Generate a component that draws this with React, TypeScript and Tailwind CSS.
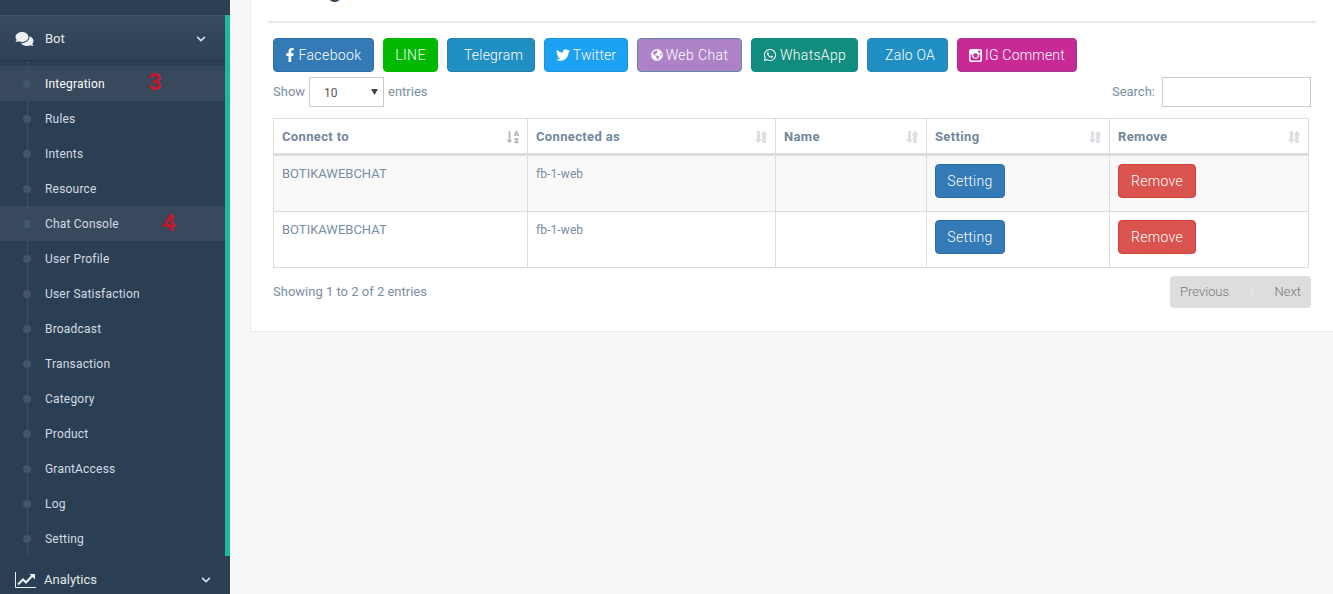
import React from "react";
import { FaComments, FaChevronDown, FaFacebookF, FaTwitter, FaGlobeAmericas, FaWhatsapp, FaSortAlphaDown } from "react-icons/fa";

const menu = ["Integration", "Rules", "Intents", "Resource", "Chat Console", "User Profile", "User Satisfaction", "Broadcast", "Transaction", "Category", "Product", "GrantAccess", "Log", "Setting"];

function SortIcon() {
  return (
    <svg width="14" height="14" viewBox="0 0 14 14" className="fill-[#dcdfe3]">
      <path d="M3 1h3v8h2.2L4.5 13.5 0.8 9H3z" />
      <path d="M8.2 13V5H6.6L10 .5 13.6 5H11.8v8z" />
    </svg>
  );
}

function InstagramIcon() {
  return (
    <svg width="13" height="13" viewBox="0 0 13 13" className="fill-white">
      <path fillRule="evenodd" d="M2 0h9a2 2 0 0 1 2 2v9a2 2 0 0 1-2 2H2a2 2 0 0 1-2-2V2a2 2 0 0 1 2-2zm7.2 1.6v2.2h2.2V1.6zM1.6 5.5V10.6c0 .5.3.8.8.8h8.2c.5 0 .8-.3.8-.8V5.5H10a3.6 3.6 0 1 1-7 0zM6.5 4.2a2.3 2.3 0 1 0 0 4.6 2.3 2.3 0 0 0 0-4.6z" />
    </svg>
  );
}

function LineChartIcon() {
  return (
    <svg width="21" height="16" viewBox="0 0 21 16" className="ml-[15px] fill-none stroke-[#ecf0f1]">
      <path d="M.5 0v15.5H21" strokeWidth="1" />
      <path d="M3 12.5l5-5 3 3 6.5-7" strokeWidth="2" />
      <path d="M14.5 2H20v5.5z" className="fill-[#ecf0f1] stroke-none" />
    </svg>
  );
}

function Btn({ label, icon, cls, w }: { label: string; icon?: React.ReactNode; cls: string; w: string }) {
  return (
    <div className={`h-[34px] rounded-[4px] border flex items-center justify-center gap-[3px] text-[14px] font-light text-white ${cls} ${w}`}>
      {icon}
      <span>{label}</span>
    </div>
  );
}

const cols = ["w-[254px]", "w-[248px]", "w-[151px]", "w-[183px]", "w-[200px]"];
const heads = ["Connect to", "Connected as", "Name", "Setting", "Remove"];

function Row({ striped, last }: { striped: boolean; last?: boolean }) {
  return (
    <div className={`flex ${last ? "h-[55px]" : "h-[56px] border-b border-[#dddddd]"} ${striped ? "bg-[#f9f9f9]" : "bg-white"}`}>
      <div className={`${cols[0]} border-r border-[#dddddd] pl-[8px] pt-[9px] leading-[18px] text-[13px]`}>BOTIKAWEBCHAT</div>
      <div className={`${cols[1]} border-r border-[#dddddd] pl-[8px] pt-[9px] leading-[18px] text-[12px] tracking-[0.1px]`}>fb-1-web</div>
      <div className={`${cols[2]} border-r border-[#dddddd]`} />
      <div className={`${cols[3]} border-r border-[#dddddd] pl-[8px] pt-[8px]`}>
        <div className="w-[70px] h-[34px] rounded-[4px] bg-[#337ab7] border border-[#2e6da4] text-white text-[14px] font-light tracking-[0.3px] flex items-center justify-center">Setting</div>
      </div>
      <div className="flex-1 pl-[8px] pt-[8px]">
        <div className="w-[78px] h-[34px] rounded-[4px] bg-[#d9534f] border border-[#d43f3a] text-white text-[14px] font-light tracking-[0.3px] flex items-center justify-center">Remove</div>
      </div>
    </div>
  );
}

export default function App() {
  return (
    <div className="flex h-[594px] w-[1333px] overflow-hidden bg-[#f7f7f7] text-[13px] text-[#7b8ea2] font-['Roboto','Liberation_Sans',sans-serif]">
      <aside className="w-[230px] shrink-0 bg-[#2a3f54] flex flex-col">
        <div className="h-[15px] shrink-0" />
        <div className="flex-1 flex flex-col">
          <div className="border-r-[5px] border-[#1abb9c]">
            <div className="h-[46px] pt-[1px] border-t border-[#425668] border-b border-b-[#23374b] bg-gradient-to-b from-[#374a5e] to-[#2d4257] flex items-center text-[13px] text-[#e7e7e7]">
              <FaComments className="ml-[15px] w-[19px] h-[16px] text-[#ecf0f1]" />
              <span className="ml-[11px] flex-1">Bot</span>
              <FaChevronDown className="mr-[19px] w-[10px] h-[10px] text-[#d8dee5]" />
            </div>
            <ul className="pt-[5px] relative">
              <li className="absolute left-[27px] top-0 bottom-0 w-px bg-[#3b5066]" />
              {menu.map((m) => {
                const active = m === "Integration" || m === "Chat Console";
                return (
                  <li key={m} className={`relative h-[35px] flex items-center pl-[45px] text-[12px] tracking-[0.2px] ${active ? "bg-[#38495e]" : ""} ${m === "Integration" ? "text-white" : "text-[#d5dbe2]"}`}>
                    <span className="absolute left-[23px] top-[14px] w-[8px] h-[8px] rounded-full bg-[#425668]" />
                    {m}
                    {m === "Integration" && <span className="absolute left-[148px] top-[2px] text-[24px] leading-[28px] font-bold text-[#c4182c]">3</span>}
                    {m === "Chat Console" && <span className="absolute left-[162px] top-[3px] text-[24px] leading-[28px] font-bold text-[#c4182c]">4</span>}
                  </li>
                );
              })}
            </ul>
          </div>
          <div className="flex-1 flex items-center pt-[9px] text-[13px] text-[#e7e7e7]">
            <LineChartIcon />
            <span className="ml-[8px] flex-1">Analytics</span>
            <FaChevronDown className="mr-[19px] w-[10px] h-[10px] text-[#d8dee5]" />
          </div>
        </div>
      </aside>

      <main className="flex-1 min-w-0 pl-[20px]">
        <section className="bg-white border-l border-b border-[#e6e9ed] h-[332px] pl-[17px] pr-[17px]">
          <div className="h-[21px] overflow-hidden">
            <h2 className="text-[24px] leading-[24px] font-medium text-[#34495e] -mt-[23px]">Manage</h2>
          </div>
          <div className="h-[2px] bg-[#e6e9ed]" />
          <div className="pl-[5px] pt-[15px]">
            <div className="flex gap-[9px]">
              <Btn label="Facebook" w="w-[101px]" cls="bg-[#337ab7] border-[#2e6da4] tracking-[0.4px]" icon={<FaFacebookF className="w-[10px] h-[14px]" />} />
              <Btn label="LINE" w="w-[55px]" cls="bg-[#00b900] border-[#00b900] tracking-[0.4px]" />
              <Btn label="Telegram" w="w-[88px]" cls="bg-[#1f8fc4] border-[#2a7ea8] pl-[5px] tracking-[0.2px]" />
              <Btn label="Twitter" w="w-[84px]" cls="bg-[#1da1f2] border-[#1b95d8] tracking-[0.1px]" icon={<FaTwitter className="w-[14px] h-[14px]" />} />
              <Btn label="Web Chat" w="w-[105px]" cls="bg-[#ae82c7] border-[#5f8ba0] tracking-[0.4px]" icon={<FaGlobeAmericas className="w-[12px] h-[12px]" />} />
              <Btn label="WhatsApp" w="w-[107px]" cls="bg-[#128c7e] border-[#128c7e] tracking-[0.3px]" icon={<FaWhatsapp className="w-[14px] h-[14px]" />} />
              <Btn label="Zalo OA" w="w-[81px]" cls="bg-[#1f8fc4] border-[#2a86b8] pl-[5px] tracking-[0.2px]" />
              <Btn label="IG Comment" w="w-[120px]" cls="bg-[#c72a94] border-[#9f3a8a] tracking-[0.2px]" icon={<InstagramIcon />} />
            </div>

            <div className="flex items-start justify-between mt-[5px] pr-[5px]">
              <div className="flex items-center h-[30px]">
                <span className="w-[36px]">Show</span>
                <div className="w-[75px] h-[30px] border border-[#cccccc] bg-white flex items-center justify-between pl-[14px] pr-[5px] text-[#555555] text-[12px]">
                  <span className="pt-[1px]">10</span>
                  <svg width="7" height="6" viewBox="0 0 7 6" className="fill-[#444444]"><path d="M0 0h7L3.5 6z" /></svg>
                </div>
                <span className="ml-[4px]">entries</span>
              </div>
              <div className="flex items-center h-[30px]">
                <span>Search:</span>
                <div className="ml-[7px] w-[149px] h-[30px] border border-[#cccccc] bg-white" />
              </div>
            </div>

            <div className="mt-[11px] w-[1036px] border border-[#dddddd]">
              <div className="flex h-[37px] border-b-[3px] border-[#dddddd] font-bold text-[13px] text-[#73879c]">
                {heads.map((h, i) => (
                  <div key={h} className={`${cols[i]} ${i < 4 ? "border-r border-[#dddddd]" : "flex-1"} flex items-center justify-between pl-[8px] pr-[7px] pt-[1px]`}>
                    <span className="tracking-[0.35px]">{h}</span>
                    {i === 0 ? <FaSortAlphaDown className="w-[14px] h-[14px] text-[#b0b8c0]" /> : <SortIcon />}
                  </div>
                ))}
              </div>
              <Row striped />
              <Row striped={false} last />
            </div>

            <div className="flex items-start justify-between mt-[8px] pr-[5px]">
              <div className="pt-[8px] leading-[15px]">Showing 1 to 2 of 2 entries</div>
              <div className="w-[141px] h-[32px] rounded-[4px] bg-[#dddddd] text-[#777777] font-light flex items-center justify-between px-[10px]">
                <span>Previous</span>
                <span className="text-[#eeeeee]">1</span>
                <span>Next</span>
              </div>
            </div>
          </div>
        </section>
      </main>
    </div>
  );
}
